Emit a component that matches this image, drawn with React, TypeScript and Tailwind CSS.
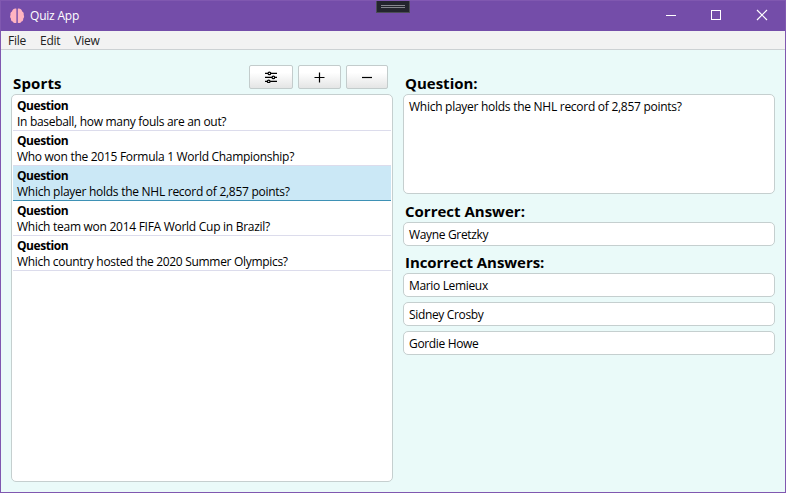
import React from "react";

const questions = [
  { text: "In baseball, how many fouls are an out?", tracking: "tracking-[-0.3px]" },
  { text: "Who won the 2015 Formula 1 World Championship?", tracking: "tracking-[-0.29px]" },
  { text: "Which player holds the NHL record of 2,857 points?", tracking: "tracking-[-0.27px]" },
  { text: "Which team won 2014 FIFA World Cup in Brazil?", tracking: "tracking-[-0.275px]" },
  { text: "Which country hosted the 2020 Summer Olympics?", tracking: "tracking-[-0.31px]" },
];

const incorrect = ["Mario Lemieux", "Sidney Crosby", "Gordie Howe"];

function BrainIcon() {
  return (
    <svg width="16" height="16" viewBox="0 0 16 16" fill="#ffb3c1">
      <path d="M7.400 .8v14c-1.400.6-3 .1-3.700-1.300-1.400-.4-1.900-1.500-1.700-2.800C1 9.600.8 8.200 1.500 7 1.100 5.300 1.900 4.100 3 3.600 3.400 1.500 5.600.1 7.400.8z" />
      <path d="M8.800 .8v14c1.400.6 3 .1 3.700-1.300 1.400-.4 1.900-1.500 1.700-2.800 1-1.100 1.200-2.500.5-3.700.4-1.700-.4-2.900-1.500-3.400C12.800 1.500 10.600.1 8.800.8z" />
    </svg>
  );
}

function SlidersIcon() {
  return (
    <svg width="12" height="12" viewBox="0 0 12 12" fill="none" stroke="#000" strokeWidth="1.2">
      <path d="M0 2.400h3M5.800 2.400H12M0 6.400h7M9.800 6.400H12M0 10.400h2.300M5.100 10.400H12" />
      <circle cx="4.400" cy="2.400" r="1.300" />
      <circle cx="8.400" cy="6.400" r="1.300" />
      <circle cx="3.700" cy="10.400" r="1.300" />
    </svg>
  );
}

function ToolButton({ className, children }: { className: string; children: React.ReactNode }) {
  return (
    <button
      className={`flex h-6 items-center justify-center rounded-[2px] border border-[#c3cccc] bg-gradient-to-b from-white from-30% to-[#e4e5e5] ${className}`}
    >
      {children}
    </button>
  );
}

function Heading({ className, children }: { className: string; children: React.ReactNode }) {
  return <h2 className={`text-[15px] leading-5 font-bold whitespace-nowrap ${className}`}>{children}</h2>;
}

function Field({ value }: { value: string }) {
  return (
    <div className="h-6 rounded-[5px] border border-[#c5cfcf] bg-white pl-[5px] text-[12px] leading-[23px] tracking-[-0.34px]">
      {value}
    </div>
  );
}

export default function App() {
  return (
    <div className="flex h-[493px] w-[786px] flex-col overflow-hidden border border-[#8058b0] bg-[#eafaf9] font-['Open_Sans','Noto_Sans',sans-serif] text-[12px] text-black">
      <header className="relative flex h-[30px] shrink-0 items-center bg-[#744da9] pl-2 text-white">
        <BrainIcon />
        <span className="ml-[5px] leading-[30px] tracking-[-0.2px]">Quiz App</span>
        <div className="absolute top-[-1px] left-[375px] flex h-[13px] w-[34px] flex-col items-center justify-center gap-px border border-[#4b4d55] bg-[#23252d]">
          <div className="h-px w-6 bg-[#85878d]" />
          <div className="h-px w-6 bg-[#85878d]" />
        </div>
        <svg className="ml-auto" width="120" height="30" viewBox="0 0 120 30" fill="none" stroke="#fff">
          <path d="M1 14.500h10" />
          <rect x="46.500" y="9.500" width="9" height="9" />
          <path d="M92 9l10 10M102 9l-10 10" strokeWidth="1.200" />
        </svg>
      </header>

      <nav className="flex h-[19px] shrink-0 gap-[14px] border-b border-[#ccd1d3] bg-[#f2f2f2] pl-[7px] leading-[19px] tracking-[-0.25px] text-[#222]">
        <span>File</span>
        <span>Edit</span>
        <span>View</span>
      </nav>

      <main className="flex min-h-0 flex-1 gap-[10px] px-[10px] pt-[15px] pb-[10px]">
        <section className="flex w-[382px] flex-col">
          <div className="flex h-[29px] gap-[5px] pr-[5px]">
            <Heading className="mr-auto pt-[8px] pl-[2px] tracking-[0.15px]">Sports</Heading>
            <ToolButton className="w-11"><SlidersIcon /></ToolButton>
            <ToolButton className="w-[43px]">
              <svg width="11" height="11" viewBox="0 0 11 11" stroke="#000" strokeWidth="1.200"><path d="M5.500 .5v10M.5 5.500h10" /></svg>
            </ToolButton>
            <ToolButton className="w-[42px]">
              <svg width="10" height="10" viewBox="0 0 10 10" stroke="#000" strokeWidth="1.200"><path d="M0 5.500h10" /></svg>
            </ToolButton>
          </div>
          <ul className="flex-1 rounded-[5px] border border-[#c5cfcf] bg-white px-px">
            {questions.map((q, i) => (
              <li
                key={q.text}
                className={`flex h-[35px] flex-col border-b pl-1 leading-4 whitespace-nowrap first:h-[36px] first:pt-[3px] ${
                  i === 2 ? "border-[#3e91b5] bg-[#cbe8f6] pt-[2px]" : "border-[#dcdcec] pt-[2px]"
                }`}
              >
                <b className="tracking-[-0.45px]">Question</b>
                <span className={q.tracking}>{q.text}</span>
              </li>
            ))}
          </ul>
        </section>

        <section className="flex w-[372px] flex-col">
          <Heading className="h-[29px] pt-[8px] pl-[2px]">Question:</Heading>
          <div className="h-[100px] rounded-[5px] border border-[#c5cfcf] bg-white pl-[5px] leading-[23px] tracking-[-0.27px]">
            Which player holds the NHL record of 2,857 points?
          </div>
          <Heading className="h-[28px] pt-[7px] pl-[2px]">Correct Answer:</Heading>
          <Field value="Wayne Gretzky" />
          <Heading className="h-[27px] pt-[6px] pl-[2px] tracking-[-0.06px]">Incorrect Answers:</Heading>
          <div className="flex flex-col gap-[5px]">
            {incorrect.map((a) => (
              <Field key={a} value={a} />
            ))}
          </div>
        </section>
      </main>
    </div>
  );
}
